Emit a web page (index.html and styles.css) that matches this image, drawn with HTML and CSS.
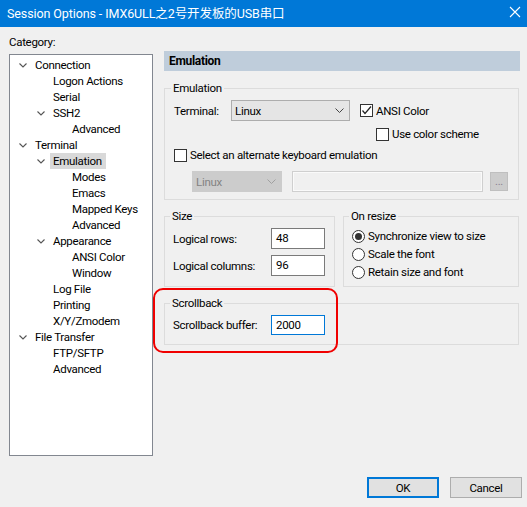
FILE: index.html
```html
<html>
<head>
    <meta charset="utf-8">
    <link rel="stylesheet" href="styles.css">
</head>
<body>
    <div class="titlebar">
        <span class="title">Session Options - IMX6ULL之2号开发板的USB串口</span>
        <svg class="close" width="12" height="12" viewBox="0 0 12 12">
            <path d="M1 1 L11 11 M11 1 L1 11" stroke="#fff" stroke-width="1.1" fill="none"/>
        </svg>
    </div>

    <div class="content">
        <div class="left">
            <div class="cat-label">Category:</div>
            <ul class="tree">
                <li class="lvl0"><span class="exp"><svg width="8" height="5" viewBox="0 0 8 5"><path d="M0.5 0.5 L4 4 L7.5 0.5" /></svg></span><span>Connection</span></li>
                <li class="lvl1"><span class="exp"></span><span>Logon Actions</span></li>
                <li class="lvl1"><span class="exp"></span><span>Serial</span></li>
                <li class="lvl1"><span class="exp"><svg width="8" height="5" viewBox="0 0 8 5"><path d="M0.5 0.5 L4 4 L7.5 0.5" /></svg></span><span>SSH2</span></li>
                <li class="lvl2"><span class="exp"></span><span>Advanced</span></li>
                <li class="lvl0"><span class="exp"><svg width="8" height="5" viewBox="0 0 8 5"><path d="M0.5 0.5 L4 4 L7.5 0.5" /></svg></span><span>Terminal</span></li>
                <li class="lvl1"><span class="exp"><svg width="8" height="5" viewBox="0 0 8 5"><path d="M0.5 0.5 L4 4 L7.5 0.5" /></svg></span><span class="selected">Emulation</span></li>
                <li class="lvl2"><span class="exp"></span><span>Modes</span></li>
                <li class="lvl2"><span class="exp"></span><span>Emacs</span></li>
                <li class="lvl2"><span class="exp"></span><span>Mapped Keys</span></li>
                <li class="lvl2"><span class="exp"></span><span>Advanced</span></li>
                <li class="lvl1"><span class="exp"><svg width="8" height="5" viewBox="0 0 8 5"><path d="M0.5 0.5 L4 4 L7.5 0.5" /></svg></span><span>Appearance</span></li>
                <li class="lvl2"><span class="exp"></span><span>ANSI Color</span></li>
                <li class="lvl2"><span class="exp"></span><span>Window</span></li>
                <li class="lvl1"><span class="exp"></span><span>Log File</span></li>
                <li class="lvl1"><span class="exp"></span><span>Printing</span></li>
                <li class="lvl1"><span class="exp"></span><span>X/Y/Zmodem</span></li>
                <li class="lvl0"><span class="exp"><svg width="8" height="5" viewBox="0 0 8 5"><path d="M0.5 0.5 L4 4 L7.5 0.5" /></svg></span><span>File Transfer</span></li>
                <li class="lvl1"><span class="exp"></span><span>FTP/SFTP</span></li>
                <li class="lvl1"><span class="exp"></span><span>Advanced</span></li>
            </ul>
        </div>

        <div class="right">
            <div class="page-header">Emulation</div>

            <fieldset class="group emu">
                <legend>Emulation</legend>
                <div class="row term-row">
                    <span class="term-label">Terminal:</span>
                    <div class="select">
                        <span>Linux</span>
                        <svg width="9" height="5" viewBox="0 0 9 5"><path d="M0.5 0.5 L4.5 4.5 L8.5 0.5" /></svg>
                    </div>
                    <span class="check checked ansi">
                        <svg width="11" height="11" viewBox="0 0 11 11"><path d="M1.5 5.5 L4 8.5 L10 1.5" /></svg>
                    </span>
                    <span class="check-text">ANSI Color</span>
                </div>
                <div class="row scheme-row">
                    <span class="check"></span>
                    <span class="check-text">Use color scheme</span>
                </div>
                <div class="row alt-row">
                    <span class="check"></span>
                    <span class="check-text">Select an alternate keyboard emulation</span>
                </div>
                <div class="row kb-row">
                    <div class="select disabled">
                        <span>Linux</span>
                        <svg width="9" height="5" viewBox="0 0 9 5"><path d="M0.5 0.5 L4.5 4.5 L8.5 0.5" /></svg>
                    </div>
                    <div class="text-disabled"></div>
                    <div class="dots-btn">...</div>
                </div>
            </fieldset>

            <div class="pair">
                <fieldset class="group size">
                    <legend>Size</legend>
                    <div class="row field-row">
                        <span class="field-label">Logical rows:</span>
                        <div class="textbox">48</div>
                    </div>
                    <div class="row field-row second">
                        <span class="field-label">Logical columns:</span>
                        <div class="textbox">96</div>
                    </div>
                </fieldset>
                <fieldset class="group resize">
                    <legend>On resize</legend>
                    <div class="radio-row"><span class="radio on"></span><span>Synchronize view to size</span></div>
                    <div class="radio-row"><span class="radio"></span><span>Scale the font</span></div>
                    <div class="radio-row"><span class="radio"></span><span>Retain size and font</span></div>
                </fieldset>
            </div>

            <fieldset class="group scroll">
                <legend>Scrollback</legend>
                <div class="row field-row">
                    <span class="field-label">Scrollback buffer:</span>
                    <div class="textbox focused">2000</div>
                </div>
            </fieldset>
        </div>
    </div>

    <div class="footer">
        <button class="btn default">OK</button>
        <button class="btn">Cancel</button>
    </div>

    <div class="mark-ring"></div>
</body>
</html>
```

FILE: styles.css
```css
body {
    margin: 0;
    width: 527px;
    height: 507px;
    overflow: hidden;
    position: relative;
    background-color: #f0f0f0;
    font-family: Roboto, "Noto Sans CJK SC", sans-serif;
    font-size: 11.5px;
    letter-spacing: -0.3px;
    color: #000;
}
.titlebar {
    height: 27px;
    background-color: #0078d7;
    color: #fff;
    display: flex;
    align-items: center;
    padding-left: 7px;
    padding-right: 6px;
}
.title {
    flex: 1;
    font-size: 12.5px;
    letter-spacing: -0.1px;
    margin-top: -3px;
}
.close {
    margin-top: -3px;
}
.content {
    display: grid;
    grid-template-columns: 144px 356px;
    column-gap: 11px;
    padding-left: 9px;
}
.cat-label {
    margin-top: 7px;
    height: 16px;
    line-height: 16px;
}
.tree {
    list-style: none;
    margin: 4px 0 0 0;
    padding: 2px 0 0 0;
    height: 398px;
    background-color: #fff;
    border: 1px solid #828790;
}
.tree li {
    display: flex;
    align-items: center;
    height: 16px;
    line-height: 16px;
}
.tree .lvl0 { padding-left: 6px; }
.tree .lvl1 { padding-left: 24px; }
.tree .lvl2 { padding-left: 43px; }
.exp {
    width: 19px;
    flex: none;
    display: flex;
    align-items: center;
}
.exp svg {
    margin-left: 3px;
}
.exp path {
    stroke: #555;
    stroke-width: 1.1;
    fill: none;
}
.selected {
    background-color: #d9d9d9;
    padding: 0 4px 0 3px;
    margin-left: -3px;
}

.right {
    padding-top: 24px;
}
.page-header {
    height: 20px;
    line-height: 20px;
    background-color: #bfcddb;
    font-weight: bold;
    font-size: 12px;
    padding-left: 5px;
}
.group {
    margin: 0 1px 0 0;
    border: 1px solid #dcdcdc;
    padding: 4px 8px 7px 9px;
    min-width: 0;
}
.group legend {
    padding: 0 2px;
    margin-left: -3px;
    height: 16px;
    line-height: 16px;
}
.emu {
    margin-top: 9px;
}
.row {
    display: flex;
    align-items: center;
}
.term-row {
    height: 21px;
}
.term-label {
    width: 57px;
}
.select {
    width: 119px;
    height: 21px;
    box-sizing: border-box;
    background-color: #e5e5e5;
    border: 1px solid #adadad;
    display: flex;
    align-items: center;
    justify-content: space-between;
    padding: 0 5px 0 3px;
}
.select path {
    stroke: #444;
    stroke-width: 1;
    fill: none;
}
.select.disabled {
    width: 90px;
    background-color: #cccccc;
    border-color: #cccccc;
    color: #838383;
}
.select.disabled path {
    stroke: #a0a0a0;
}
.check {
    width: 13px;
    height: 13px;
    box-sizing: border-box;
    border: 1px solid #333;
    background-color: #fff;
    display: flex;
    align-items: center;
    justify-content: center;
    flex: none;
}
.check path {
    stroke: #222;
    stroke-width: 1.2;
    fill: none;
}
.check.ansi {
    margin-left: 10px;
}
.check-text {
    margin-left: 3px;
}
.scheme-row {
    height: 16px;
    margin-top: 5px;
    padding-left: 202px;
}
.alt-row {
    height: 16px;
    margin-top: 5px;
}
.kb-row {
    margin-top: 8px;
    padding-left: 18px;
    height: 21px;
}
.text-disabled {
    width: 191px;
    height: 21px;
    box-sizing: border-box;
    margin-left: 10px;
    border: 1px solid #cfcfcf;
    box-shadow: inset 0 0 0 1px #fafafa;
    background-color: #f0f0f0;
}
.dots-btn {
    width: 18px;
    height: 19px;
    box-sizing: border-box;
    margin-left: 7px;
    background-color: #cccccc;
    border: 1px solid #bfbfbf;
    color: #8a7f90;
    font-size: 11px;
    line-height: 18px;
    text-align: center;
}

.pair {
    display: flex;
    gap: 8px;
    margin-top: 8px;
}
.size {
    width: 171px;
    box-sizing: border-box;
    margin: 0;
    padding-left: 8px;
    padding-bottom: 9px;
}
.resize {
    flex: 1;
    padding: 3px 8px 5px 8px;
}
.field-row {
    height: 21px;
}
.field-row.second {
    margin-top: 6px;
}
.field-label {
    width: 98px;
}
.textbox {
    width: 54px;
    height: 21px;
    box-sizing: border-box;
    background-color: #fff;
    border: 1px solid #7a7a7a;
    padding-left: 4px;
    line-height: 19px;
}
.textbox.focused {
    border-color: #0078d7;
}
.radio-row {
    display: flex;
    align-items: center;
    height: 18px;
}
.radio {
    width: 13px;
    height: 13px;
    box-sizing: border-box;
    border: 1px solid #333;
    border-radius: 50%;
    background-color: #fff;
    margin-right: 3px;
    display: flex;
    align-items: center;
    justify-content: center;
}
.radio.on::after {
    content: "";
    width: 7px;
    height: 7px;
    border-radius: 50%;
    background-color: #333;
}
.scroll {
    margin-top: 8px;
    padding-top: 3px;
    padding-left: 8px;
    padding-bottom: 9px;
}
.scroll .textbox {
    height: 20px;
}

.footer {
    display: flex;
    justify-content: flex-end;
    gap: 11px;
    margin-top: 21px;
    padding-right: 5px;
}
.btn {
    width: 72px;
    height: 21px;
    font-family: Roboto, sans-serif;
    font-size: 11.5px;
    letter-spacing: -0.3px;
    color: #000;
    background-color: #e1e1e1;
    border: 1px solid #adadad;
    padding: 0;
}
.btn.default {
    border: 2px solid #0078d7;
}

.mark-ring {
    position: absolute;
    left: 153px;
    top: 288px;
    width: 181px;
    height: 61px;
    border: 2px solid #f00000;
    border-radius: 10px;
}
```
